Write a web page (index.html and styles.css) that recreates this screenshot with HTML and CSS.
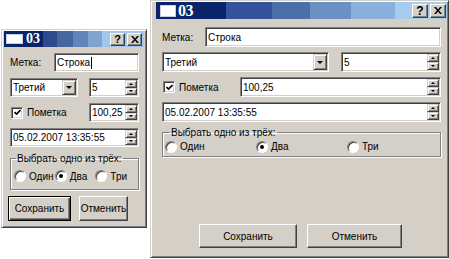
FILE: index.html
```html
<!DOCTYPE html>
<html>
<head>
  <meta charset="UTF-8">
  <title>03</title>
  <link rel="stylesheet" href="styles.css">
</head>
<body>

<div class="desk">

  <div class="win win-s">
    <div class="title">
      <span class="ico"></span>
      <b class="caption">03</b>
      <span class="tbtns">
        <span class="tb">?</span>
        <span class="tb"><svg viewBox="0 0 8 7"><path d="M0 0h2l2 2.4 2-2.4h2l-3 3.5 3 3.5h-2l-2-2.4-2 2.4h-2l3-3.5z"/></svg></span>
      </span>
    </div>
    <div class="body">
      <div class="row">
        <span class="lbl">Метка:</span>
        <div class="field grow">Строка<span class="caret"></span></div>
      </div>
      <div class="row">
        <div class="field combo">Третий<span class="drop"><i class="dn"></i></span></div>
        <div class="field spin">5<span class="arrows"><span><i class="up"></i></span><span><i class="dn"></i></span></span></div>
      </div>
      <div class="row">
        <span class="check"><span class="box"><svg viewBox="0 0 7 7"><path d="M0.5 3l2 2 4-4"/></svg></span>Пометка</span>
        <div class="field spin">100,25<span class="arrows"><span><i class="up"></i></span><span><i class="dn"></i></span></span></div>
      </div>
      <div class="row">
        <div class="field spin grow">05.02.2007 13:35:55<span class="arrows"><span><i class="up"></i></span><span><i class="dn"></i></span></span></div>
      </div>
      <fieldset class="group">
        <legend>Выбрать одно из трёх:</legend>
        <div class="radios">
          <span class="radio"><i></i>Один</span>
          <span class="radio on"><i></i>Два</span>
          <span class="radio"><i></i>Три</span>
        </div>
      </fieldset>
      <div class="buttons">
        <span class="btn default">Сохранить</span>
        <span class="btn">Отменить</span>
      </div>
    </div>
  </div>

  <div class="win win-l">
    <div class="title">
      <span class="ico"></span>
      <b class="caption">03</b>
      <span class="tbtns">
        <span class="tb">?</span>
        <span class="tb"><svg viewBox="0 0 8 7"><path d="M0 0h2l2 2.4 2-2.4h2l-3 3.5 3 3.5h-2l-2-2.4-2 2.4h-2l3-3.5z"/></svg></span>
      </span>
    </div>
    <div class="body">
      <div class="row">
        <span class="lbl">Метка:</span>
        <div class="field grow">Строка</div>
      </div>
      <div class="row">
        <div class="field combo">Третий<span class="drop"><i class="dn"></i></span></div>
        <div class="field spin">5<span class="arrows"><span><i class="up"></i></span><span><i class="dn"></i></span></span></div>
      </div>
      <div class="row">
        <span class="check"><span class="box"><svg viewBox="0 0 7 7"><path d="M0.5 3l2 2 4-4"/></svg></span>Пометка</span>
        <div class="field spin">100,25<span class="arrows"><span><i class="up"></i></span><span><i class="dn"></i></span></span></div>
      </div>
      <div class="row">
        <div class="field spin grow">05.02.2007 13:35:55<span class="arrows"><span><i class="up"></i></span><span><i class="dn"></i></span></span></div>
      </div>
      <fieldset class="group">
        <legend>Выбрать одно из трёх:</legend>
        <div class="radios">
          <span class="radio"><i></i>Один</span>
          <span class="radio on"><i></i>Два</span>
          <span class="radio"><i></i>Три</span>
        </div>
      </fieldset>
      <div class="buttons">
        <span class="btn">Сохранить</span>
        <span class="btn">Отменить</span>
      </div>
    </div>
  </div>

</div>

</body>
</html>
```

FILE: styles.css
```css
* {
  box-sizing: border-box;
}

body {
  margin: 0;
  background: #fff;
  color: #000;
  font-family: "Liberation Sans", Arial, sans-serif;
  font-size: 10px;
}

.desk {
  display: flex;
  align-items: flex-start;
}

/* window frame */
.win {
  background: #d4d0c8;
  border: 1px solid;
  border-color: #d4d0c8 #404040 #404040 #d4d0c8;
  box-shadow: inset 1px 1px #fff, inset -1px -1px #808080;
  padding: 1px 2px 2px 2px;
  display: flex;
  flex-direction: column;
}

.win-s {
  margin: 29px 0 0 1px;
  width: 146px;
  height: 199px;
}

.win-l {
  margin-left: 3px;
  width: 299px;
  height: 258px;
  padding: 1px 1px 2px 5px;
}

/* title bar */
.title {
  display: flex;
  align-items: center;
  color: #fff;
  flex: none;
}

.win-s .title {
  height: 16px;
  background: linear-gradient(to right, #0a246a 0 28%, #2c4a8c 28% 38%, #46669f 38% 49%, #6184b9 49% 60%, #7fa4d1 60% 70%, #a3c6ee 70%);
}

.win-l .title {
  height: 17px;
  background: linear-gradient(to right, #0a246a 0 24%, #34539a 24% 40%, #4a6faa 40% 53%, #6a90c4 53% 67%, #8ab0dc 67% 82%, #a8ccf0 82%);
}

.ico {
  background: #fff;
  border: 1px solid #c8d0e8;
}

.win-s .ico {
  margin-left: 2px;
  width: 17px;
  height: 10px;
}

.win-l .ico {
  margin-left: 4px;
  width: 16px;
  height: 12px;
}

.caption {
  font-family: "Liberation Serif", "Times New Roman", serif;
  font-weight: bold;
}

.win-s .caption {
  margin-left: 3px;
  font-size: 14px;
}

.win-l .caption {
  margin-left: 2px;
  font-size: 16px;
  letter-spacing: -0.5px;
}

.tbtns {
  margin-left: auto;
  display: flex;
  gap: 2px;
  margin-right: 2px;
}

.win-l .tbtns {
  margin-right: 1px;
}

.tb {
  background: #d4d0c8;
  border: 1px solid;
  border-color: #fff #404040 #404040 #fff;
  box-shadow: inset -1px -1px #808080;
  display: flex;
  align-items: center;
  justify-content: center;
  color: #000;
  font-weight: bold;
  font-size: 11px;
  width: 15px;
  height: 13px;
}

.win-l .tb {
  width: 16px;
  height: 14px;
  font-size: 12px;
}

.tb svg {
  width: 8px;
  height: 7px;
  fill: #000;
}

/* body */
.body {
  flex: 1;
  display: flex;
  flex-direction: column;
}

.win-s .body {
  padding: 6px 5px 4px 6px;
  gap: 6px;
}

.win-l .body {
  padding: 8px 6px 7px 6px;
  gap: 5px;
}

.row {
  display: flex;
  align-items: center;
  justify-content: space-between;
  flex: none;
}

.win-s .row {
  height: 19px;
}

.win-l .row {
  height: 20px;
}

.lbl {
  flex: none;
}

.win-s .lbl {
  width: 44px;
}

.win-l .lbl {
  width: 43px;
}

/* sunken field */
.field {
  height: 100%;
  background: #fff;
  border: 1px solid;
  border-color: #808080 #fff #fff #808080;
  box-shadow: inset 1px 1px #404040, inset -1px -1px #d4d0c8;
  display: flex;
  align-items: center;
  padding: 0 2px 0 2px;
  white-space: nowrap;
}

.grow {
  flex: 1;
}

.caret {
  width: 1px;
  height: 12px;
  background: #000;
  margin-left: 1px;
}

.combo,
.spin {
  padding-right: 1px;
}

.drop,
.arrows span {
  background: #d4d0c8;
  border: 1px solid;
  border-color: #d4d0c8 #404040 #404040 #d4d0c8;
  box-shadow: inset 1px 1px #fff, inset -1px -1px #808080;
  display: flex;
  align-items: center;
  justify-content: center;
}

.drop {
  margin-left: auto;
  width: 14px;
  height: calc(100% - 2px);
}

.arrows {
  margin-left: auto;
  width: 12px;
  height: calc(100% - 2px);
  display: flex;
  flex-direction: column;
}

.arrows span {
  flex: 1;
}

.up,
.dn {
  width: 0;
  height: 0;
  border-left: 3px solid transparent;
  border-right: 3px solid transparent;
}

.up {
  border-bottom: 3px solid #000;
}

.dn {
  border-top: 3px solid #000;
}

.arrows .up,
.arrows .dn {
  border-left-width: 2px;
  border-right-width: 2px;
  border-top-width: 2px;
  border-bottom-width: 2px;
}

.arrows .up {
  border-top-width: 0;
}

.arrows .dn {
  border-bottom-width: 0;
}

.win-s .combo {
  width: 68px;
}

.win-s .spin:not(.grow) {
  width: 50px;
}

.win-l .combo {
  width: 167px;
}

.win-l .row:nth-child(2) .spin {
  width: 100px;
}

.win-l .row:nth-child(3) .spin {
  width: 201px;
}

/* checkbox */
.check {
  display: flex;
  align-items: center;
  gap: 4px;
  margin-left: 1px;
}

.box {
  width: 12px;
  height: 12px;
  background: #fff;
  border: 1px solid;
  border-color: #808080 #fff #fff #808080;
  box-shadow: inset 1px 1px #404040, inset -1px -1px #d4d0c8;
  display: flex;
  align-items: center;
  justify-content: center;
}

.box svg {
  width: 7px;
  height: 7px;
  fill: none;
  stroke: #000;
  stroke-width: 1.6;
}

/* group box */
.group {
  margin: 0;
  border: 1px solid #808080;
  box-shadow: 1px 1px #fff, inset 1px 1px #fff;
  flex: none;
  display: block;
  min-width: 0;
}

.win-s .group {
  height: 37px;
  padding: 0 2px 0 3px;
}

.win-l .group {
  height: 30px;
  padding: 0 2px 0 2px;
}

.group legend {
  padding: 0 1px;
  margin-left: 2px;
}

.win-l .group legend {
  margin-left: 5px;
}

.radios {
  display: flex;
  align-items: center;
}

.win-s .radios {
  height: 24px;
}

.win-l .radios {
  height: 17px;
}

.radio {
  display: flex;
  align-items: center;
}

.win-s .radio {
  width: 44px;
}

.win-l .radio {
  width: 94px;
}

.radio i {
  width: 12px;
  height: 12px;
  border-radius: 50%;
  background: #fff;
  border: 1px solid;
  border-color: #808080 #fff #fff #808080;
  box-shadow: inset 1px 1px #404040;
  margin-right: 3px;
  display: flex;
  align-items: center;
  justify-content: center;
}

.radio.on i::after {
  content: "";
  width: 4px;
  height: 4px;
  border-radius: 50%;
  background: #000;
}

/* buttons */
.buttons {
  margin-top: auto;
  display: flex;
  flex: none;
}

.win-s .buttons {
  gap: 8px;
  margin-left: -2px;
  height: 25px;
}

.win-l .buttons {
  gap: 10px;
  margin-left: 37px;
  height: 24px;
}

.btn {
  background: #d4d0c8;
  border: 1px solid;
  border-color: #fff #404040 #404040 #fff;
  box-shadow: inset -1px -1px #808080;
  display: flex;
  align-items: center;
  justify-content: center;
}

.btn.default {
  border: 1px solid #000;
  box-shadow: inset 1px 1px #fff, inset -1px -1px #404040, inset -2px -2px #808080;
}

.win-s .btn {
  width: 49px;
}

.win-s .btn.default {
  width: 63px;
}

.win-l .btn {
  width: 98px;
}

.win-l .btn + .btn {
  width: 95px;
}
```
